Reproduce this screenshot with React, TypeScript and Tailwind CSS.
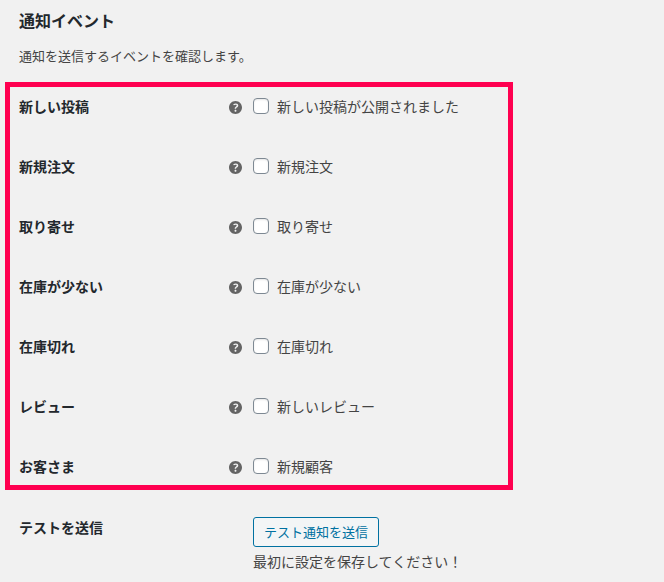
import { useState } from "react";

interface NotificationEvent {
  id: string;
  title: string;
  label: string;
}

const EVENTS: NotificationEvent[] = [
  { id: "new_post", title: "新しい投稿", label: "新しい投稿が公開されました" },
  { id: "new_order", title: "新規注文", label: "新規注文" },
  { id: "backorder", title: "取り寄せ", label: "取り寄せ" },
  { id: "low_stock", title: "在庫が少ない", label: "在庫が少ない" },
  { id: "no_stock", title: "在庫切れ", label: "在庫切れ" },
  { id: "review", title: "レビュー", label: "新しいレビュー" },
  { id: "new_customer", title: "お客さま", label: "新規顧客" },
];

function HelpIcon() {
  return (
    <svg viewBox="3 3 14 14" className="mt-[3px] size-[13px] fill-[#646464]" aria-hidden="true">
      <path d="M17 10c0-3.87-3.14-7-7-7-3.87 0-7 3.13-7 7s3.13 7 7 7c3.86 0 7-3.13 7-7zm-6.3 1.48H9.14v-.43c0-.38.08-.7.24-.98s.46-.57.88-.89c.41-.29.68-.53.81-.71.14-.18.2-.39.2-.62 0-.25-.09-.44-.28-.58-.19-.13-.45-.19-.79-.19-.58 0-1.25.19-2 .57l-.64-1.28c.87-.49 1.8-.74 2.77-.74.81 0 1.45.2 1.92.58.48.39.71.91.71 1.55 0 .43-.09.8-.29 1.11-.19.32-.57.67-1.11 1.06-.38.28-.61.49-.71.63-.1.15-.15.34-.15.57v.35zm-1.47 2.74c-.18-.17-.27-.42-.27-.73 0-.33.08-.58.26-.75s.43-.25.77-.25c.32 0 .57.09.75.26s.27.42.27.74c0 .3-.09.55-.27.72-.18.18-.43.27-.75.27-.33 0-.58-.09-.76-.27z" />
    </svg>
  );
}

export default function App() {
  const [enabled, setEnabled] = useState<Record<string, boolean>>({});

  const toggle = (id: string) => {
    setEnabled((prev) => ({ ...prev, [id]: !prev[id] }));
  };

  return (
    <main className="min-h-screen bg-[#f1f1f1] px-[5px] pt-[10px] pb-2 font-['Noto_Sans_CJK_JP',sans-serif] text-sm leading-5 text-[#444]">
      <div className="px-[14px]">
        <h2 className="text-base leading-5 font-bold text-[#23282d]">通知イベント</h2>
        <p className="mt-4 text-[13px] leading-5">通知を送信するイベントを確認します。</p>
      </div>

      {/* Events */}
      <section className="mt-4 flex max-w-[508px] flex-col gap-10 border-5 border-[#ff0050] p-[9px]">
        {EVENTS.map((event) => (
          <div key={event.id} className="grid grid-cols-[210px_24px_1fr] items-center">
            <h3 className="font-bold text-[#23282d]">{event.title}</h3>
            <HelpIcon />
            <label htmlFor={event.id} className="flex items-center gap-2">
              <input
                id={event.id}
                type="checkbox"
                checked={!!enabled[event.id]}
                onChange={() => toggle(event.id)}
                className="size-4 shrink-0 appearance-none rounded border border-[#7e8993] bg-white shadow-[inset_0_1px_2px_rgba(0,0,0,0.1)] checked:bg-[#007cba]"
              />
              {event.label}
            </label>
          </div>
        ))}
      </section>

      {/* Test notification */}
      <section className="mt-[27px] grid grid-cols-[234px_1fr] px-[14px]">
        <h3 className="font-bold text-[#23282d]">テストを送信</h3>
        <div>
          <button
            type="button"
            className="block h-[30px] rounded-[3px] border border-[#0071a1] bg-[#f3f5f6] px-[10px] text-[13px] text-[#0071a1] hover:bg-[#f1f1f1]"
          >
            テスト通知を送信
          </button>
          <p className="mt-1">最初に設定を保存してください！</p>
        </div>
      </section>
    </main>
  );
}
